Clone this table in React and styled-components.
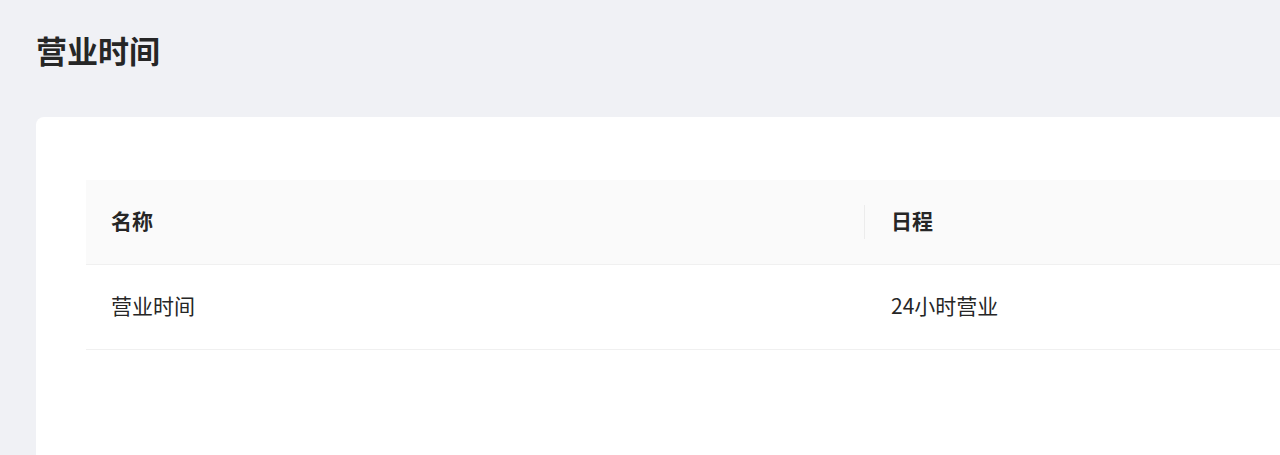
import React from "react";
import styled, { createGlobalStyle } from "styled-components";

const Global = createGlobalStyle`
  html, body {
    margin: 0;
    padding: 0;
    background: #f0f1f5;
    overflow: hidden;
    font-family: "Noto Sans CJK SC", "Noto Sans", sans-serif;
    color: #262626;
  }
`;

const Page = styled.div`
  padding: 22px 0 0 36px;
  min-height: 455px;
  box-sizing: border-box;
`;

const Title = styled.h1`
  margin: 0;
  font-size: 31px;
  line-height: 56px;
  font-weight: 600;
  color: #262626;
`;

const Card = styled.section`
  margin-top: 39px;
  width: 1400px;
  min-height: 400px;
  background: #ffffff;
  border-radius: 8px;
  padding: 63px 0 0 50px;
  box-sizing: border-box;
`;

const Table = styled.table`
  width: 1500px;
  border-collapse: collapse;
  table-layout: fixed;
  font-size: 21px;
`;

const HeadCell = styled.th`
  position: relative;
  height: 84px;
  box-sizing: border-box;
  padding: 0 0 4px ${(p) => p.$pad}px;
  width: ${(p) => (p.$width ? `${p.$width}px` : "auto")};
  background: #fafafa;
  border-bottom: 1px solid #f0f0f0;
  text-align: left;
  font-weight: 600;
  color: #262626;
  vertical-align: middle;

  &::before {
    content: "";
    display: ${(p) => (p.$divider ? "block" : "none")};
    position: absolute;
    left: 0;
    top: 50%;
    transform: translateY(-50%);
    width: 1px;
    height: 34px;
    background: #ececec;
  }
`;

const Cell = styled.td`
  height: 85px;
  box-sizing: border-box;
  padding: 0 0 3px ${(p) => p.$pad}px;
  border-bottom: 1px solid #f0f0f0;
  color: #262626;
  vertical-align: middle;
`;

export default function App() {
  return (
    <>
      <Global />
      <Page>
        <Title>营业时间</Title>
        <Card>
          <Table>
            <thead>
              <tr>
                <HeadCell $pad={25} $width={778}>名称</HeadCell>
                <HeadCell $pad={27} $divider>日程</HeadCell>
              </tr>
            </thead>
            <tbody>
              <tr>
                <Cell $pad={25}>营业时间</Cell>
                <Cell $pad={27}>24小时营业</Cell>
              </tr>
            </tbody>
          </Table>
        </Card>
      </Page>
    </>
  );
}
